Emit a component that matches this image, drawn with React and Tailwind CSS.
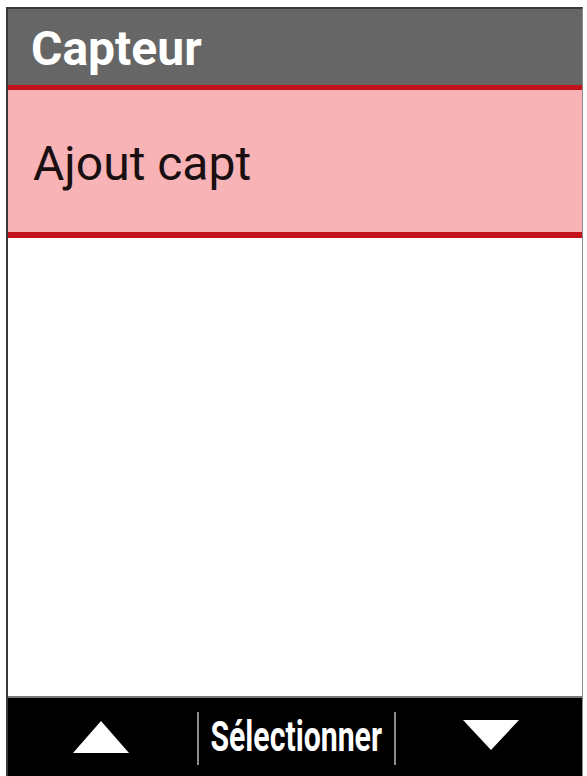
// App.jsx — device menu screen: "Capteur" list with soft-key bar
function TriangleUp() {
  return (
    <svg width="56" height="32" viewBox="0 0 56 32" className="block">
      <polygon points="28,0 56,32 0,32" fill="#ffffff" />
    </svg>
  );
}

function TriangleDown() {
  return (
    <svg width="56" height="30" viewBox="0 0 56 30" className="block">
      <polygon points="0,0 56,0 28,30" fill="#ffffff" />
    </svg>
  );
}

export default function App() {
  return (
    <div className="w-full h-[776px] bg-white pl-[6px] pt-[7px] pr-[4px] font-['Roboto',sans-serif]">
      <div className="h-full flex flex-col border-l-2 border-t-2 border-r border-l-[#3a3a3a] border-t-[#3a3a3a] border-r-[#8a8a8a]">
        {/* Title bar */}
        <div className="h-[81px] shrink-0 bg-[#666666] border-b-[5px] border-[#c3121c] pl-[23px] pt-[16px]">
          <h1 className="text-[48px] leading-none font-bold text-white">Capteur</h1>
        </div>

        {/* Selected item */}
        <div className="h-[148px] shrink-0 bg-[#f7b3b5] border-b-[6px] border-[#c3121c] pl-[25px] pt-[50px]">
          <p className="text-[48px] leading-none text-[#1a0f10]">Ajout capt</p>
        </div>

        {/* Empty list area */}
        <div className="flex-1 bg-white" />

        {/* Soft-key bar */}
        <div className="h-[80px] shrink-0 bg-black border-t-2 border-[#7a7a7a] flex items-center">
          <div className="w-[189px] flex justify-center pr-[4px]">
            <TriangleUp />
          </div>
          <div className="w-[2px] h-[53px] mt-[3px] bg-[#8c8c8c]" />
          <div className="w-[195px] flex justify-center">
            <span className="shrink-0 whitespace-nowrap text-[42px] leading-none font-bold text-white scale-x-[0.72]">
              Sélectionner
            </span>
          </div>
          <div className="w-[2px] h-[53px] mt-[3px] bg-[#8c8c8c]" />
          <div className="flex-1 flex justify-center pl-[4px] pb-[4px]">
            <TriangleDown />
          </div>
        </div>
      </div>
    </div>
  );
}
